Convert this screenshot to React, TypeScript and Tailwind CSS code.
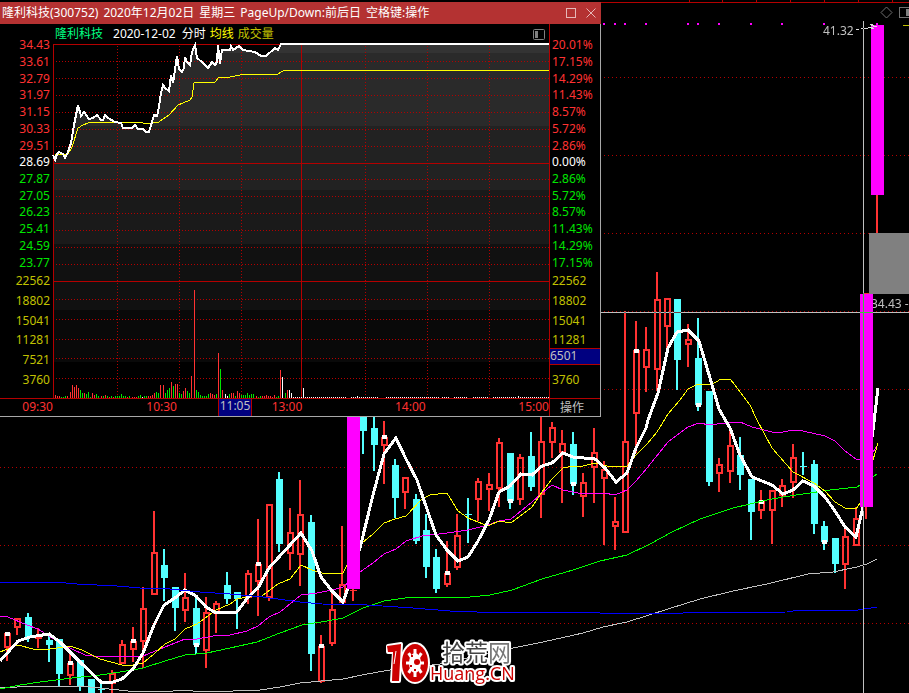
const PRICES = ["34.43", "33.61", "32.79", "31.97", "31.15", "30.33", "29.51", "28.69", "27.87", "27.05", "26.23", "25.41", "24.59", "23.77"];
const PERCENTS = ["20.01%", "17.15%", "14.29%", "11.43%", "8.57%", "5.72%", "2.86%", "0.00%", "2.86%", "5.72%", "8.57%", "11.43%", "14.29%", "17.15%"];
const VOLUMES = ["22562", "18802", "15041", "11281", "7521", "3760"];

// [centre, high, low, body top, body bottom, colour, marked at]
type Candle = [number, number, number, number, number, "r" | "c", number?];

const CANDLES: Candle[] = [
  [7, 633, 661, 633, 648, "r", 634],
  [17, 618, 635, 618, 628, "r"],
  [28, 613, 642, 617, 637, "c"],
  [38, 628, 648, 637, 639, "r"],
  [49, 635, 662, 640, 645, "c"],
  [59, 639, 687, 639, 674, "c"],
  [70, 653, 685, 663, 676, "r", 663],
  [80, 660, 691, 660, 686, "c"],
  [91, 679, 693, 679, 693, "c"],
  [101, 683, 693, 689, 690, "c"],
  [112, 670, 693, 673, 684, "r"],
  [122, 640, 664, 644, 664, "r"],
  [133, 627, 662, 641, 650, "r", 641],
  [143, 587, 668, 608, 642, "r"],
  [154, 511, 595, 552, 595, "r"],
  [164, 549, 601, 565, 578, "c"],
  [175, 587, 631, 587, 608, "c"],
  [185, 573, 622, 597, 611, "r"],
  [196, 598, 654, 608, 645, "c", 645],
  [206, 597, 668, 612, 651, "r"],
  [216, 601, 633, 603, 614, "r"],
  [227, 572, 604, 585, 599, "c"],
  [237, 592, 629, 592, 599, "c"],
  [248, 570, 604, 573, 598, "r"],
  [258, 519, 616, 564, 582, "r", 564],
  [269, 504, 601, 504, 598, "r"],
  [279, 472, 552, 479, 544, "c"],
  [290, 508, 570, 532, 554, "r"],
  [300, 480, 586, 514, 555, "r"],
  [311, 515, 671, 522, 654, "c"],
  [321, 635, 683, 646, 682, "r", 646],
  [332, 593, 646, 609, 644, "r"],
  [342, 526, 602, 584, 603, "r"],
  [353, 589, 601, 590, 590, "r"],
  [363, 400, 454, 400, 431, "c"],
  [374, 416, 471, 428, 445, "c"],
  [384, 421, 484, 437, 446, "r", 437],
  [395, 459, 518, 465, 498, "c"],
  [405, 477, 509, 477, 493, "r"],
  [416, 494, 544, 499, 541, "c"],
  [426, 514, 578, 530, 567, "c"],
  [436, 549, 593, 557, 589, "c"],
  [447, 541, 587, 573, 585, "r", 573],
  [457, 514, 570, 535, 568, "r"],
  [468, 498, 543, 514, 515, "c"],
  [478, 478, 521, 481, 500, "r"],
  [489, 473, 511, 484, 490, "r"],
  [499, 438, 507, 442, 489, "r"],
  [510, 453, 509, 453, 501, "c", 501],
  [520, 454, 505, 457, 500, "r"],
  [531, 432, 491, 456, 487, "c"],
  [541, 417, 518, 441, 495, "r"],
  [552, 422, 458, 427, 443, "r"],
  [562, 430, 503, 443, 453, "r"],
  [573, 432, 495, 444, 484, "c", 484],
  [583, 473, 517, 482, 497, "r"],
  [594, 428, 503, 452, 468, "r"],
  [604, 461, 545, 469, 479, "r"],
  [615, 497, 550, 521, 527, "r"],
  [625, 311, 533, 441, 533, "r"],
  [636, 321, 453, 350, 414, "r", 351],
  [646, 327, 392, 349, 368, "r"],
  [657, 272, 391, 299, 370, "r"],
  [667, 298, 348, 298, 327, "r"],
  [677, 299, 390, 299, 360, "c"],
  [688, 324, 367, 339, 345, "r"],
  [698, 318, 411, 358, 405, "c", 405],
  [709, 391, 486, 391, 482, "c"],
  [719, 458, 492, 464, 474, "r"],
  [730, 430, 483, 445, 472, "r"],
  [740, 437, 490, 455, 475, "c"],
  [751, 479, 540, 479, 512, "c"],
  [761, 490, 519, 501, 511, "r", 502],
  [772, 490, 544, 490, 511, "r"],
  [782, 479, 507, 485, 496, "r"],
  [793, 444, 498, 457, 483, "r"],
  [803, 452, 475, 466, 467, "c"],
  [814, 460, 534, 464, 524, "c"],
  [824, 521, 550, 526, 542, "c", 542],
  [835, 538, 573, 538, 564, "c"],
  [845, 529, 589, 536, 565, "r"],
  [856, 507, 546, 518, 546, "r"],
  [866, 293, 519, 293, 295, "r"],
];

const LINES = {
  blue: "0,582 55,582 77,584 117,586 140,588 170,589 200,592 230,594 263,597 300,602 322,604 367,605 413,608 450,611 477,612 567,612 600,613 683,613 787,612 800,610 858,610 877,607",
  gray: "0,688 17,687 80,686 100,688 128,691 173,691 183,690 193,691 233,691 260,690 280,687 300,683 343,679 367,674 390,670 440,664 513,648 543,642 583,633 603,627 627,622 668,609 700,599 733,591 767,584 808,574 833,572 857,567 867,564 877,559",
  green: "0,689 20,685 40,682 72,678 100,675 133,670 143,668 165,661 185,655 207,653 230,648 257,642 280,633 302,625 327,621 343,618 363,608 384,601 412,597 470,597 490,595 512,590 542,579 573,570 600,561 627,555 650,544 672,532 700,519 733,508 767,500 783,497 830,490 857,487 873,477 877,474",
  magenta: "0,616 8,617 27,625 38,629 60,643 72,649 85,655 93,656 143,656 165,647 185,639 197,639 213,636 230,635 247,631 258,626 269,617 280,612 301,595 317,593 332,590 343,587 360,572 373,563 384,554 396,549 406,541 422,536 447,533 468,530 488,525 499,521 511,519 532,502 542,493 552,485 563,490 573,492 583,494 604,493 615,495 627,490 636,481 647,468 668,442 680,433 688,427 699,423 710,425 717,424 740,422 752,427 772,432 783,432 793,430 803,431 825,436 835,441 845,451 856,459 862,460 873,452 877,446",
  yellow: "0,652 18,645 33,649 50,649 70,646 82,650 100,659 122,665 133,665 143,663 154,654 165,644 175,639 185,629 197,624 216,610 230,604 237,599 248,597 262,596 278,584 290,579 301,565 312,570 322,573 333,574 343,573 347,565 362,543 373,534 384,523 395,519 406,516 422,499 430,495 447,493 458,511 468,518 488,526 499,521 511,523 532,507 542,492 552,479 563,468 573,466 583,466 595,463 607,466 627,466 636,455 647,444 657,432 668,414 680,400 688,389 698,384 711,385 721,379 731,380 750,405 757,420 772,448 793,472 814,483 825,491 835,502 845,508 856,509 860,503 873,460 878,443",
  white: "0,661 18,641 30,637 49,634 60,642 80,662 101,682 113,682 122,679 133,669 143,653 154,625 164,605 175,598 185,590 196,596 206,607 216,613 237,612 248,597 258,588 269,568 279,557 301,533 312,551 321,577 332,591 343,602 348,588 360,548 373,495 384,454 396,438 406,459 417,480 428,512 436,535 447,550 458,561 468,557 478,541 489,520 499,492 510,486 521,474 532,475 542,466 552,463 563,453 573,457 595,459 605,468 616,482 627,473 636,448 646,428 648,420 658,393 668,348 677,332 688,330 699,341 710,378 719,409 730,428 740,455 752,477 772,485 783,494 793,490 803,481 814,486 825,497 835,511 845,527 856,537 863,507 874,422 878,388",
};

const PRICE_LINE =
  "53,155 55,160 57,154 59,152 63,154 65,158 68,152 71,143 74,125 78,105 81,116 84,112 89,119 93,118 97,115 101,120 103,120 105,115 108,118 115,122 121,123 123,128 132,128 135,125 138,129 143,129 146,132 149,132 154,115 157,116 159,107 161,93 163,85 165,88 169,91 171,75 173,83 177,56 179,69 182,72 184,68 185,57 187,62 190,65 192,52 195,45 197,58 202,62 208,68 212,62 215,65 217,62 218,45 220,64 222,50 230,50 231,46 233,50 239,46 243,50 255,52 261,56 266,56 275,48 278,50 281,44 549,44";
const AVERAGE_LINE =
  "55,154 64,154 68,154 72,147 78,128 83,125 88,123 103,122 137,122 143,123 153,123 159,122 163,119 169,115 178,105 183,103 190,100 192,97 194,83 198,82 215,82 219,77 230,77 240,75 278,74 283,71 549,70";

// One entry per minute: colour and height
const MINUTE_VOLUMES =
  "r3 r2 r2 g1 g1 g2 r2 r6 r13 r11 r13 r10 g8 g5 r5 g4 g6 g1 r5 r3 g4 g2 r2 g2 r3 g2 r1 g2 r1 g2 g2 g2 g4 g2 g2 r1 g2 r1 r1 r1 g2 g3 w1 g2 g2 r2 r2 r3 r5 g6 g5 r13 r13 g5 g8 g10 r16 g12 r14 r14 g5 g4 r7 r10 g7 g5 r22 r108 g8 g6 g3 g2 g2 g2 g4 r5 r4 r3 g4 r45 g29 r8 w4 w2 g4 r5 r5 g2 r7 r5 g3 g3 g3 g5 g3 g4 g4 r2 g1 g2 r2 r2 r3 r2 r2 r1 r3 g1 g2 r28 w21 g5 r8 w8 w5 w1 w1 w1 w1 w1 w10".split(" ");

const BAR_COLORS: Record<string, string> = { r: "#ff3232", g: "#00e600", w: "#ffffff" };

const BANDS = [
  { y: 44, h: 9, fill: "#333333" },
  { y: 53, h: 73, fill: "#2a2a2a" },
  { y: 126, h: 64, fill: "#222222" },
  { y: 190, h: 54, fill: "#1a1a1a" },
  { y: 244, h: 66, fill: "#111111" },
  { y: 310, h: 52, fill: "#090909" },
];

function CandleShape({ candle }: { candle: Candle }) {
  const [x, high, low, top, bottom, color, mark] = candle;
  const stroke = color === "r" ? "#ff3232" : "#54ffff";
  const height = bottom - top;
  return (
    <g>
      {color === "c" || height < 3 ? (
        <>
          <rect x={x - 1} y={high} width={2} height={low - high} fill={stroke} />
          <rect x={x - 3} y={top} width={7} height={Math.max(height, 1)} fill={stroke} />
        </>
      ) : (
        <>
          <rect x={x - 1} y={high} width={2} height={top - high} fill={stroke} />
          <rect x={x - 1} y={bottom} width={2} height={low - bottom} fill={stroke} />
          <rect x={x - 2} y={top + 1} width={5} height={height - 2} fill="none" stroke={stroke} strokeWidth={2} />
        </>
      )}
      {mark && <rect x={x - 2} y={mark - 2} width={5} height={4} fill="#fff" />}
    </g>
  );
}

function Average({ points, color, width = 1 }: { points: string; color: string; width?: number }) {
  return <polyline points={points} fill="none" stroke={color} strokeWidth={width} />;
}

function DailyChart() {
  return (
    <svg viewBox="0 0 909 693" className="block h-auto w-full" shapeRendering="crispEdges" role="img" aria-label="日K线">
      {/* top ruler */}
      <path d="M601 2.5H909M689.5 0V2M722.5 0V2M756.5 0V2M790.5 0V2M824.5 0V2M858.5 0V2M892.5 0V2" stroke="#b40000" />

      {[77, 155, 233, 311, 389, 467, 545, 623].map((y) => (
        <path key={y} d={`M0 ${y}.5H909`} stroke="#b40000" strokeDasharray="1 3" />
      ))}

      {[603, 614, 624, 645, 687, 697, 718, 750, 781, 823].map((x) => (
        <rect key={x} x={x} y={23} width={2} height={2} fill="#f0f" />
      ))}

      {CANDLES.map((candle) => (
        <CandleShape key={candle[0]} candle={candle} />
      ))}

      <Average points={LINES.gray} color="#c0c0c0" />
      <Average points={LINES.green} color="#00ff00" />
      <Average points={LINES.magenta} color="#ff00ff" />
      <Average points={LINES.yellow} color="#ffff00" />
      <Average points={LINES.white} color="#ffffff" width={3} />
      <Average points={LINES.blue} color="#0000ff" />

      {/* limit-up days */}
      <rect x={347} y={400} width={13} height={189} fill="#f0f" />
      <rect x={871} y={25} width={13} height={170} fill="#f0f" />
      <rect x={876} y={23} width={2} height={2} fill="#f0f" />
      <rect x={876} y={195} width={2} height={38} fill="#ff3232" />

      <g fill="#c0c0c0" fontSize={12} className="font-['Noto_Sans','Noto_Sans_CJK_SC',sans-serif]">
        <text x={823} y={35}>41.32</text>
        <text x={871} y={308}>34.43 -</text>
      </g>
      <rect x={860} y={294} width={13} height={213} fill="#f0f" />
      <rect x={869} y={233} width={40} height={61} fill="#808080" />
      <path d="M856 29.5H859M861 28.5H868M868 27.5H873M871 25.5H874M873 26.5H877M871 28.5H874M870 24.5H873" stroke="#e0e0e0" />

      {/* crosshair */}
      <path d="M863.5 21V693M601 312.5H909" stroke="#c0c0c0" className="mix-blend-difference" />

      <g fill="none" stroke="#707070">
        <path d="M881 12.5L886.5 7L892 12.5L886.5 18Z" shapeRendering="auto" />
        <rect x={899.5} y={7.5} width={16} height={10} rx={1} />
      </g>
      <rect x={906} y={9} width={3} height={7} fill="#808080" />
      <path d="M903 25.5H909" stroke="#c0c000" />

      <SiteLogo />
    </svg>
  );
}

function SiteLogo() {
  const teeth = [0, 45, 90, 135, 180, 225, 270, 315];
  return (
    <g shapeRendering="auto" strokeLinejoin="round">
      <g stroke="#fff" strokeWidth={4} fill="#fff">
        <path d="M388 646L401 644L399 681H392L394 652L388 652Z" />
        <ellipse cx={415} cy={663} rx={13} ry={19} />
      </g>
      <path d="M387 646L401 644L399 681H392L393 652L388 652Z" fill="#c00" />
      <path d="M396 651L394 664" stroke="#fff" strokeWidth={1} />
      <ellipse cx={415} cy={663} rx={13} ry={19} fill="#c00" />
      <ellipse cx={415} cy={663} rx={6} ry={10} fill="#fff" />
      {teeth.map((angle) => {
        const rad = (angle * Math.PI) / 180;
        return (
          <path
            key={angle}
            d={`M415 663L${415 + Math.cos(rad) * 9} ${663 + Math.sin(rad) * 14}`}
            stroke="#fff"
            strokeWidth={3}
          />
        );
      })}
      <circle cx={417} cy={662} r={3} fill="#c00" />
      <path d="M412 655V657M411 665V667M415 669V671" stroke="#c00" strokeWidth={2} />
      <g stroke="#fff" strokeWidth={4} paintOrder="stroke">
        <text x={442} y={661} fontSize={23} fill="#444" className="font-['Liberation_Sans','Noto_Sans_CJK_SC',sans-serif]">
          拾荒<tspan fill="#777">网</tspan>
        </text>
        <text x={430} y={680} fontSize={18} fill="#c00" className="font-['Open_Sans','Noto_Sans',sans-serif]">
          Huang.CN
        </text>
      </g>
    </g>
  );
}

function MinutePlot() {
  return (
    <svg viewBox="53 44 496 354" preserveAspectRatio="none" className="block h-[354px] w-full overflow-visible" shapeRendering="crispEdges" role="img" aria-label="分时走势">
      <clipPath id="under-price">
        <polygon points={`${PRICE_LINE} 549,362 53,362`} />
      </clipPath>
      <g clipPath="url(#under-price)">
        {BANDS.map((band) => (
          <rect key={band.y} x={53} y={band.y} width={496} height={band.h} fill={band.fill} />
        ))}
      </g>

      <g stroke="#b40000">
        {[61, 78, 95, 112, 129, 146, 179, 196, 213, 230, 247, 264, 299, 319, 339, 358, 378].map((y) => (
          <path key={y} d={`M56 ${y}.5H549`} strokeDasharray="1 2" />
        ))}
        {[117, 179, 241, 365, 427, 489].map((x) => (
          <path key={x} d={`M${x}.5 46V398`} strokeDasharray="1 2" />
        ))}
        <path d="M53 44.5H549M53 163.5H549M53 281.5H549M53.5 44V398M301.5 44V398" />
      </g>

      {MINUTE_VOLUMES.map((bar, i) => {
        const height = Number(bar.slice(1));
        return (
          <rect
            key={i}
            x={Math.round(53 + (i + 1) * 2.067)}
            y={398 - height}
            width={1}
            height={height}
            fill={BAR_COLORS[bar[0]]}
          />
        );
      })}
      <path d="M305 397.5H347M351 397.5H379M386 397.5H439M442 397.5H450M454 397.5H468M473 397.5H489M493 397.5H517M520 397.5H549" stroke="#fff" strokeDasharray="1 1" />
      <path d="M357.5 396V398M518.5 396V398" stroke="#fff" />

      <polyline points={AVERAGE_LINE} fill="none" stroke="#ffff00" />
      <polyline points={PRICE_LINE} fill="none" stroke="#fff" strokeWidth={2} />
    </svg>
  );
}

function Scale({ values, covered, className }: { values: string[]; covered?: string; className: string }) {
  return (
    <div className={className}>
      <ul className="grid h-[234px] auto-rows-fr">
        {values.map((value, i) => (
          <li
            key={i}
            className={`flex flex-col justify-center ${i < 7 ? "text-[#ff3232]" : i === 7 ? "text-white" : "text-[#00e600]"}`}
          >
            {value}
          </li>
        ))}
      </ul>
      <ul className="grid h-[119px] auto-rows-fr text-[#c0c000]">
        {VOLUMES.map((value) => (
          <li key={value} className="flex flex-col justify-center">
            {value !== covered && value}
          </li>
        ))}
      </ul>
    </div>
  );
}

function MinuteWindow() {
  return (
    <section className="absolute top-[2px] left-0 w-[601px] border-r border-b border-[#a8a8a8] bg-black">
      <header className="-mr-px flex h-[22px] items-center justify-between bg-[#b43232] pr-1 pl-0.5 text-white">
        <h1 className="flex gap-[5px]">
          <span>隆利科技(300752)</span>
          <span>2020年12月02日</span>
          <span>星期三</span>
          <span>PageUp/Down:前后日</span>
          <span>空格键:操作</span>
        </h1>
        <div className="flex items-center gap-2">
          <button type="button" aria-label="最大化">
            <svg viewBox="0 0 12 12" className="block size-3" fill="none" stroke="#e6b8b8">
              <rect x={1.5} y={1.5} width={9} height={9} />
            </svg>
          </button>
          <button type="button" aria-label="关闭">
            <svg viewBox="0 0 12 12" className="block size-3" stroke="#e6b8b8">
              <path d="M1.5 1.5L10.5 10.5M10.5 1.5L1.5 10.5" />
            </svg>
          </button>
        </div>
      </header>

      <div className="grid grid-cols-[53px_1fr_51px]">
        <Scale values={PRICES} className="pt-[13px] pr-[3px] text-right" />
        <div>
          <div className="flex h-5 items-center justify-between pr-1 pl-0.5">
            <p className="flex gap-1">
              <span className="mr-1.5 text-[#00ff80]">隆利科技</span>
              <span className="mr-0.5 text-white">2020-12-02</span>
              <span className="text-white">分时</span>
              <span className="text-[#ffff00]">均线</span>
              <span className="text-[#c0c000]">成交量</span>
            </p>
            <button type="button" aria-label="切换侧栏">
              <svg viewBox="0 0 12 12" className="block size-3" fill="none" stroke="#808080">
                <rect x={0.5} y={1.5} width={11} height={10} rx={1} />
                <rect x={2} y={3} width={3} height={7} fill="#808080" stroke="none" />
              </svg>
            </button>
          </div>
          <MinutePlot />
        </div>
        <div className="relative border-l border-[#b40000]">
          <Scale values={PERCENTS} covered="7521" className="pt-[13px] pl-0.5" />
          {/* value under the cursor */}
          <div className="absolute top-[324px] right-0 left-0 h-[17px] border-y border-[#b40000] bg-[#000080] leading-[14px] text-[#c0c0c0]">
            6501
          </div>
        </div>
      </div>

      <footer className="relative grid h-[18px] grid-cols-[53px_126px_repeat(3,1fr)_51px] border-t border-[#b40000] text-right text-[#ff3232]">
        <time>09:30</time>
        <time className="pr-0.5">10:30</time>
        <time>13:00</time>
        <time>14:00</time>
        <time>15:00</time>
        <button type="button" className="border-l border-[#b40000] pr-1.5 text-center text-[#c0c0c0]">
          操作
        </button>
        <time className="absolute inset-y-0 left-[218px] w-[34px] border-x border-[#b40000] bg-[#000080] text-center leading-[14px] text-[#c0c0c0]">
          11:05
        </time>
      </footer>
    </section>
  );
}

export default function App() {
  return (
    <main className="relative min-h-screen overflow-hidden bg-black font-['Noto_Sans','Noto_Sans_CJK_SC',sans-serif] text-[12px] leading-4">
      <DailyChart />
      <MinuteWindow />
    </main>
  );
}
